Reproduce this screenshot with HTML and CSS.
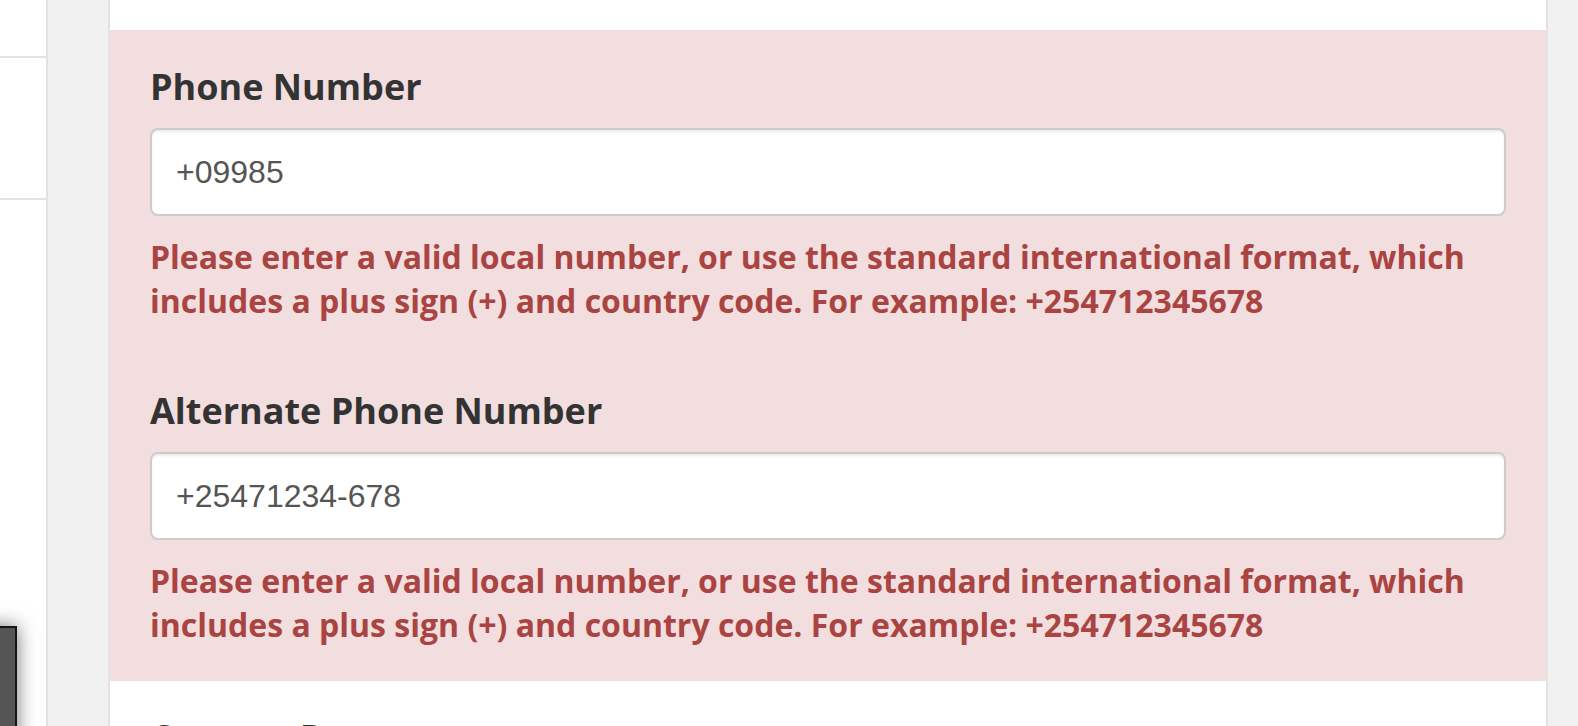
FILE: index.html
```html
<!DOCTYPE html>
<html lang="en">
<head>
<meta charset="utf-8">
<title>Contact details</title>
<link rel="stylesheet" href="styles.css">
</head>
<body>
<div class="page">
  <aside class="sidebar">
    <div class="side-block side-top"></div>
    <div class="side-block side-mid"></div>
    <div class="side-block side-rest"></div>
  </aside>
  <div class="gutter"></div>
  <main class="card">
    <div class="section has-error">
      <div class="form-group">
        <label class="control-label" for="phone">Phone Number</label>
        <input class="form-control" id="phone" type="text" value="+09985">
        <p class="help-block">Please enter a valid local number, or use the standard international format, which includes a plus sign (+) and country code. For example: +254712345678</p>
      </div>
      <div class="form-group">
        <label class="control-label" for="alt-phone">Alternate Phone Number</label>
        <input class="form-control" id="alt-phone" type="text" value="+25471234-678">
        <p class="help-block">Please enter a valid local number, or use the standard international format, which includes a plus sign (+) and country code. For example: +254712345678</p>
      </div>
    </div>
    <div class="section section-next">
      <div class="form-group">
        <label class="control-label" for="contact">Contact Person</label>
      </div>
    </div>
  </main>
  <div class="gutter-right"></div>
</div>
<div class="feedback-tab"></div>
</body>
</html>
```

FILE: styles.css
```css
html, body {
  margin: 0;
  padding: 0;
  height: 100%;
  overflow: hidden;
  background: #f1f1f1;
  font-family: "Open Sans", "Noto Sans", sans-serif;
}

.page {
  display: flex;
  min-height: 100vh;
}

.sidebar {
  width: 46px;
  background: #ffffff;
  border-right: 2px solid #e2e2e2;
  display: flex;
  flex-direction: column;
}

.side-block {
  border-bottom: 2px solid #e2e2e2;
}

.side-top {
  height: 56px;
}

.side-mid {
  height: 140px;
}

.side-rest {
  flex: 1;
  border-bottom: none;
}

.gutter {
  width: 60px;
  background: #f1f1f1;
}

.card {
  flex: 1;
  background: #ffffff;
  border-left: 2px solid #e3e3e3;
  border-right: 2px solid #e3e3e3;
  padding-top: 30px;
}

.gutter-right {
  width: 30px;
  background: #f1f1f1;
}

.section {
  padding: 32px 40px 34px;
}

.section-next {
  padding-top: 32px;
}

.has-error {
  background: #f2dede;
}

.form-group + .form-group {
  margin-top: 63px;
}

.control-label {
  display: block;
  font-size: 36px;
  font-weight: 700;
  line-height: 50px;
  color: #333333;
  margin-bottom: 16px;
}

.form-control {
  display: block;
  box-sizing: border-box;
  width: 100%;
  height: 88px;
  margin: 0;
  padding: 0 24px;
  font-family: "Liberation Sans", Arial, sans-serif;
  font-size: 32px;
  color: #555555;
  background: #ffffff;
  border: 2px solid #cccccc;
  border-radius: 8px;
  box-shadow: inset 0 2px 2px rgba(0, 0, 0, 0.075);
  outline: none;
}

.help-block {
  margin: 19px 0 0;
  font-size: 32px;
  font-weight: 700;
  line-height: 44px;
  color: #a94442;
}

.feedback-tab {
  position: fixed;
  left: -100px;
  top: 626px;
  width: 113px;
  height: 200px;
  background: #555555;
  border: 2px solid #151515;
  box-shadow: 0 0 18px rgba(0, 0, 0, 0.55);
}
```
